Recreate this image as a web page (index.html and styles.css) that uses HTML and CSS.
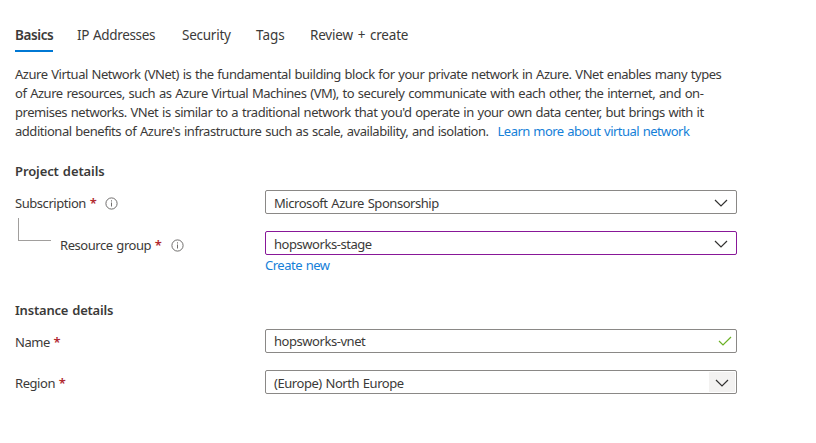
FILE: index.html
```html
<!DOCTYPE html>
<html lang="en">
<head>
<meta charset="utf-8">
<title>Create virtual network</title>
<link rel="stylesheet" href="styles.css">
</head>
<body>
<nav class="tabs">
  <a class="tab active">Basics</a>
  <a class="tab addresses">IP Addresses</a>
  <a class="tab security">Security</a>
  <a class="tab tags">Tags</a>
  <a class="tab review">Review + create</a>
</nav>
<p class="intro"><span class="lead">Azure Virtual Network (VNet) is the fundamental building block for your private network in Azure. VNet enables many types</span><br>of Azure resources, such as Azure Virtual Machines (VM), to securely communicate with each other, the internet, and on-<br>premises networks. VNet is similar to a traditional network that you'd operate in your own data center, but brings with it<br>additional benefits of Azure's infrastructure such as scale, availability, and isolation.<a class="link learn">Learn more about virtual network</a></p>
<h2 class="heading project">Project details</h2>
<div class="row subscription">
  <label class="label">Subscription <span class="req">*</span>
    <svg class="info" viewBox="0 0 13 13"><circle cx="6.5" cy="6.5" r="5.6"/><path d="M6.5 5.5v4M6.5 3.3v1.2"/></svg>
  </label>
  <div class="field">Microsoft Azure Sponsorship<svg class="chevron" viewBox="0 0 14 8"><path d="M1 1l6 6 6-6"/></svg></div>
</div>
<div class="row group">
  <div class="branch"></div>
  <label class="label nested">Resource group <span class="req">*</span>
    <svg class="info" viewBox="0 0 13 13"><circle cx="6.5" cy="6.5" r="5.6"/><path d="M6.5 5.5v4M6.5 3.3v1.2"/></svg>
  </label>
  <div class="field edited">hopsworks-stage<svg class="chevron" viewBox="0 0 14 8"><path d="M1 1l6 6 6-6"/></svg></div>
</div>
<a class="link create">Create new</a>
<h2 class="heading instance">Instance details</h2>
<div class="row name">
  <label class="label">Name <span class="req">*</span></label>
  <div class="field text">hopsworks-vnet<svg class="check" viewBox="0 0 14 10"><path d="M1 5l4 4 8-8"/></svg></div>
</div>
<div class="row region">
  <label class="label">Region <span class="req">*</span></label>
  <div class="field">(Europe) North Europe<span class="arrow-box"><svg class="chevron" viewBox="0 0 14 8"><path d="M1 1l6 6 6-6"/></svg></span></div>
</div>
</body>
</html>
```
FILE: styles.css
```css
* { box-sizing: border-box; }
body {
  margin: 0;
  padding: 24px 0 0 15px;
  width: 816px;
  height: 443px;
  overflow: hidden;
  background: #fff;
  color: #3b3a39;
  font: 13px/19px "Noto Sans", sans-serif;
  letter-spacing: -0.45px;
  word-spacing: 0.8px;
}
.tabs { display: flex; height: 28px; line-height: 23px; font-size: 13.5px; }
.tab { height: 28px; white-space: nowrap; }
.active { width: 38px; margin-right: 24px; font-weight: 600; letter-spacing: -0.4px; border-bottom: 2px solid #0078d4; }
.addresses { width: 105px; letter-spacing: -0.35px; }
.security { width: 74px; letter-spacing: -0.25px; }
.tags { width: 54px; letter-spacing: 0; }
.review { letter-spacing: -0.2px; word-spacing: 1.5px; }
.intro { margin: 13px 0 0; width: 740px; white-space: nowrap; letter-spacing: -0.462px; }
.lead { letter-spacing: -0.472px; }
.link { color: #1580d8; }
.learn { margin-left: 9px; letter-spacing: -0.54px; }
.heading { margin: 0; font-size: 13px; line-height: 20px; font-weight: 600; letter-spacing: -0.1px; }
.project { margin-top: 20px; }
.instance.heading { letter-spacing: -0.2px; }
.row { display: flex; width: 722px; height: 24px; }
.label { display: flex; align-items: center; width: 250px; height: 26px; white-space: pre; }
.req { color: #b0282f; font-size: 13px; font-weight: 600; }
.info { width: 13px; height: 13px; margin-left: 9px; fill: none; stroke: #605e5c; stroke-width: 0.9; }
.field {
  display: flex;
  align-items: center;
  justify-content: space-between;
  width: 472px;
  height: 24px;
  padding: 2px 8px 0;
  border: 1px solid #8a8886;
  border-radius: 2px;
}
.text { padding: 0 8px; }
.chevron { width: 14px; height: 8px; fill: none; stroke: #323130; stroke-width: 1.2; }
.subscription { margin-top: 9px; }
.group { margin-top: 17px; }
.branch { width: 33px; height: 23px; margin: -13px 9px 0 3px; border: solid #a19f9d; border-width: 0 0 1px 1px; }
.nested { width: 205px; height: 28px; }
.edited { border-color: #881798; }
.create { display: block; width: 80px; margin: 1px 0 0 250px; letter-spacing: -0.5px; }
.instance { margin-top: 25px; }
.name { margin-top: 9px; }
.check { width: 14px; height: 10px; margin-right: -4px; fill: none; stroke: #6bb126; stroke-width: 1.2; }
.region { margin-top: 17px; }
.arrow-box { display: flex; align-items: center; justify-content: center; width: 26px; height: 20px; margin: -2px -7px 0 0; padding-top: 2px; background: #f3f2f1; }
```
